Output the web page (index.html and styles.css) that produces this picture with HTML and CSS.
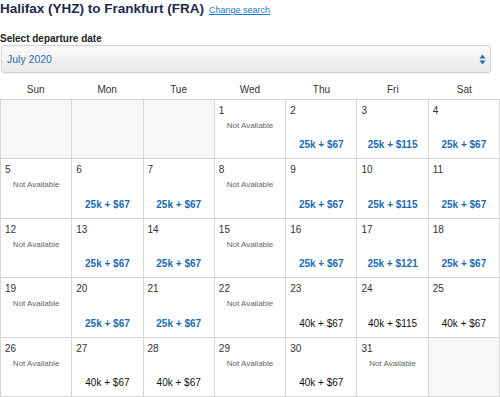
FILE: index.html
```html
<!DOCTYPE html>
<html>
<head>
<meta charset="utf-8">
<link rel="stylesheet" href="styles.css">
</head>
<body>
<div class="page">
  <div class="titlebar">
    <h1 class="title">Halifax (YHZ) to Frankfurt (FRA)</h1>
    <a class="change" href="#">Change search</a>
  </div>
  <div class="label">Select departure date</div>
  <div class="select">
    <span class="select-value">July 2020</span>
    <svg class="arrows" width="7" height="11" viewBox="0 0 7 11"><path d="M3.5 0.5 L6.5 4.5 L0.5 4.5 Z" fill="#2a6db5"/><path d="M3.5 10.5 L6.5 6.5 L0.5 6.5 Z" fill="#2a6db5"/></svg>
  </div>
  <div class="dow">
    <div>Sun</div><div>Mon</div><div>Tue</div><div>Wed</div><div>Thu</div><div>Fri</div><div>Sat</div>
  </div>
  <div class="cal">
    <div class="cell empty"></div>
    <div class="cell empty"></div>
    <div class="cell empty"></div>
    <div class="cell"><span class="num">1</span><span class="na">Not Available</span></div>
    <div class="cell"><span class="num">2</span><span class="price blue">25k + $67</span></div>
    <div class="cell"><span class="num">3</span><span class="price blue">25k + $115</span></div>
    <div class="cell"><span class="num">4</span><span class="price blue">25k + $67</span></div>

    <div class="cell"><span class="num">5</span><span class="na">Not Available</span></div>
    <div class="cell"><span class="num">6</span><span class="price blue">25k + $67</span></div>
    <div class="cell"><span class="num">7</span><span class="price blue">25k + $67</span></div>
    <div class="cell"><span class="num">8</span><span class="na">Not Available</span></div>
    <div class="cell"><span class="num">9</span><span class="price blue">25k + $67</span></div>
    <div class="cell"><span class="num">10</span><span class="price blue">25k + $115</span></div>
    <div class="cell"><span class="num">11</span><span class="price blue">25k + $67</span></div>

    <div class="cell"><span class="num">12</span><span class="na">Not Available</span></div>
    <div class="cell"><span class="num">13</span><span class="price blue">25k + $67</span></div>
    <div class="cell"><span class="num">14</span><span class="price blue">25k + $67</span></div>
    <div class="cell"><span class="num">15</span><span class="na">Not Available</span></div>
    <div class="cell"><span class="num">16</span><span class="price blue">25k + $67</span></div>
    <div class="cell"><span class="num">17</span><span class="price blue">25k + $121</span></div>
    <div class="cell"><span class="num">18</span><span class="price blue">25k + $67</span></div>

    <div class="cell"><span class="num">19</span><span class="na">Not Available</span></div>
    <div class="cell"><span class="num">20</span><span class="price blue">25k + $67</span></div>
    <div class="cell"><span class="num">21</span><span class="price blue">25k + $67</span></div>
    <div class="cell"><span class="num">22</span><span class="na">Not Available</span></div>
    <div class="cell"><span class="num">23</span><span class="price dark">40k + $67</span></div>
    <div class="cell"><span class="num">24</span><span class="price dark">40k + $115</span></div>
    <div class="cell"><span class="num">25</span><span class="price dark">40k + $67</span></div>

    <div class="cell"><span class="num">26</span><span class="na">Not Available</span></div>
    <div class="cell"><span class="num">27</span><span class="price dark">40k + $67</span></div>
    <div class="cell"><span class="num">28</span><span class="price dark">40k + $67</span></div>
    <div class="cell"><span class="num">29</span><span class="na">Not Available</span></div>
    <div class="cell"><span class="num">30</span><span class="price dark">40k + $67</span></div>
    <div class="cell"><span class="num">31</span><span class="na">Not Available</span></div>
    <div class="cell empty"></div>
  </div>
</div>
</body>
</html>
```
FILE: styles.css
```css
* { box-sizing: border-box; }
html, body { margin: 0; padding: 0; background: #fff; }
body { font-family: "Liberation Sans", Arial, sans-serif; color: #333; }
.page { width: 500px; }
.titlebar { display: flex; align-items: baseline; gap: 5px; height: 30px; padding-top: 1px; }
.title { margin: 0; font-size: 13.5px; font-weight: bold; color: #1c2b4a; line-height: 16px; }
.change { font-size: 9px; color: #1a7bc9; text-decoration: underline; }
.label { font-size: 10px; font-weight: bold; color: #222; line-height: 13px; margin-top: 2px; height: 13px; }
.select {
  width: 490px; height: 28px; margin-left: 1px;
  border: 1px solid #d3d3d3; border-radius: 3px;
  background: linear-gradient(#fbfbfb, #e9e9e9);
  box-shadow: 0 1px 1px rgba(0,0,0,0.06);
  display: flex; align-items: center; justify-content: space-between;
  padding: 0 4px 0 5px;
}
.select-value { font-size: 10.5px; color: #2a6db5; }
.arrows { display: block; }
.dow { display: grid; grid-template-columns: repeat(7, 1fr); height: 26px; align-items: end; padding-bottom: 3px; }
.dow div { text-align: center; font-size: 10px; color: #333; line-height: 12px; }
.cal {
  display: grid; grid-template-columns: repeat(7, 1fr); grid-template-rows: repeat(5, 59.4px);
  border-top: 1px solid #d6d6d6; border-left: 1px solid #d6d6d6;
}
.cell {
  border-right: 1px solid #d6d6d6; border-bottom: 1px solid #d6d6d6;
  display: flex; flex-direction: column; padding: 4px 4px 7px 4px; background: #fff;
}
.cell.empty { background: #f7f7f7; }
.num { font-size: 10px; line-height: 13px; color: #333; }
.na { font-size: 8px; line-height: 11px; color: #666; text-align: center; margin-top: 3px; }
.price { margin-top: auto; text-align: center; font-size: 10px; line-height: 13px; }
.price.blue { color: #1a6bb3; font-weight: bold; }
.price.dark { color: #111; }
```
